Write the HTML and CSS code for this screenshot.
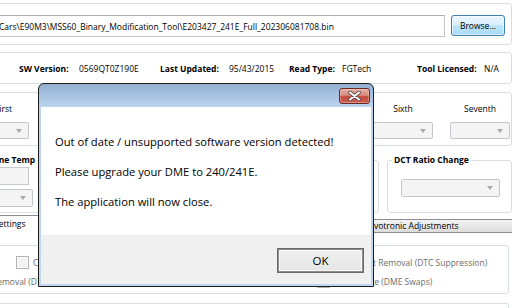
FILE: index.html
```html
<!DOCTYPE html>
<html lang="en">
<head>
    <meta charset="UTF-8">
    <title>MSS60 Binary Modification Tool</title>
    <link rel="stylesheet" href="styles.css">
</head>
<body>
    <div class="app">
        <div class="group file-group">
            <input class="path-box" type="text" value="Cars\E90M3\MSS60_Binary_Modification_Tool\E203427_241E_Full_202306081708.bin">
            <button class="browse-btn">Browse...</button>
        </div>

        <div class="group info-group">
            <span class="info-label">SW Version:</span><span>0569QT0Z190E</span>
            <span class="info-label">Last Updated:</span><span>95/43/2015</span>
            <span class="info-label">Read Type:</span><span>FGTech</span>
            <span class="info-label">Tool Licensed:</span><span>N/A</span>
        </div>

        <div class="group gear-group">
            <div class="gear-col"><span>First</span><div class="combo"></div></div>
            <div class="gear-col"><span>Second</span><div class="combo"></div></div>
            <div class="gear-col"><span>Third</span><div class="combo"></div></div>
            <div class="gear-col"><span>Fourth</span><div class="combo"></div></div>
            <div class="gear-col"><span>Fifth</span><div class="combo"></div></div>
            <div class="gear-col"><span>Sixth</span><div class="combo"></div></div>
            <div class="gear-col"><span>Seventh</span><div class="combo"></div></div>
        </div>

        <div class="option-row">
            <fieldset class="box temp-box">
                <legend>Engine Temp</legend>
                <div class="text-box"></div>
                <div class="combo temp-combo"></div>
            </fieldset>
            <fieldset class="box mid-box">
                <legend>Rev Limiter</legend>
            </fieldset>
            <fieldset class="box dct-box">
                <legend>DCT Ratio Change</legend>
                <div class="combo dct-combo"></div>
            </fieldset>
        </div>

        <div class="tabs">
            <div class="tab-strip">
                <span class="tab active">Settings</span>
                <span class="tab tab-fill">Limiters</span>
                <span class="tab tab-servo">Servotronic Adjustments</span>
            </div>
            <div class="tab-page">
                <div class="group flag-group">
                    <div class="flag-row row-a">
                        <label class="flag"><span class="check"></span>Cold Start Delete</label>
                        <label class="flag"><span class="check"></span>Cat Removal (DTC Suppression)</label>
                    </div>
                    <div class="flag-row row-b">
                        <label class="flag"><span class="check"></span>Secondary Air Removal (DTC Suppression)</label>
                        <label class="flag"><span class="check"></span>EWS Delete (DME Swaps)</label>
                    </div>
                </div>
                <div class="group next-group"></div>
            </div>
        </div>
    </div>

    <!-- message box shown on load -->
    <div class="dialog">
        <div class="title-bar">
            <button class="close-btn">
                <svg width="13" height="10" viewBox="0 0 13 10">
                    <path d="M2 1.5 L11 8.5 M11 1.5 L2 8.5" stroke="#5a4a48" stroke-width="3.6" stroke-linecap="round"/>
                    <path d="M2 1.5 L11 8.5 M11 1.5 L2 8.5" stroke="#ffffff" stroke-width="2" stroke-linecap="round"/>
                </svg>
            </button>
        </div>
        <div class="dialog-body">
            <p>Out of date / unsupported software version detected!</p>
            <p>Please upgrade your DME to 240/241E.</p>
            <p>The application will now close.</p>
        </div>
        <div class="dialog-footer">
            <button class="ok-btn">OK</button>
        </div>
    </div>
</body>
</html>
```

FILE: styles.css
```css
body {
    margin: 0;
    overflow: hidden;
    background-color: #fff;
    font-family: "Open Sans", sans-serif;
    font-size: 8.5px;
    color: #000;
}
.app {
    width: 572px;
    height: 308px;
    margin-left: -60px;
    overflow: hidden;
}
.group {
    border: 1px solid #d5dfe5;
    border-radius: 3px;
    box-sizing: border-box;
}
.file-group {
    margin-top: 3px;
    height: 42px;
    display: flex;
    align-items: flex-start;
    padding: 11px 0 0 51px;
}
.path-box {
    width: 453px;
    height: 22px;
    box-sizing: border-box;
    margin: 0;
    border: 1px solid #c2c6cc;
    border-top-color: #abadb3;
    padding: 0 0 0 6px;
    font-family: inherit;
    font-size: inherit;
    color: #000;
    background: #fff;
    outline: none;
}
.browse-btn {
    margin: 0 0 0 6px;
    width: 54px;
    height: 21px;
    padding: 0;
    border: 1px solid #3c7fb1;
    border-radius: 3px;
    background: linear-gradient(#eaf6fd 0%, #d9f0fc 49%, #bee6fd 50%, #a7d9f5 100%);
    box-shadow: inset 0 0 0 1px rgba(255, 255, 255, 0.6);
    font-family: inherit;
    font-size: inherit;
    color: #000;
}
.info-group {
    margin-top: 7px;
    height: 32px;
    display: grid;
    grid-template-columns: 60px 81px 69px 60px 53px 75px 67px auto;
    align-items: center;
    padding: 1px 0 0 78px;
}
.info-label {
    font-weight: bold;
}
.gear-group {
    margin-top: 8px;
    height: 54px;
    display: grid;
    grid-template-columns: repeat(5, 80.8px) 77px 60px;
    padding: 10px 0 0 28px;
}
.gear-col {
    width: 60px;
    display: flex;
    flex-direction: column;
    align-items: center;
    gap: 7px;
}
.gear-col span {
    line-height: 12px;
}
.gear-col:first-child span {
    margin-left: 9px;
}
.combo {
    width: 60px;
    height: 17px;
    box-sizing: border-box;
    border: 1px solid #c3c6ca;
    border-radius: 2px;
    background: #f4f4f4;
    display: flex;
    align-items: center;
    justify-content: flex-end;
    padding-right: 6px;
}
.combo::after {
    content: "";
    border-left: 3.5px solid transparent;
    border-right: 3.5px solid transparent;
    border-top: 4px solid #a9a9a9;
}
.option-row {
    margin-top: 8px;
    display: flex;
    align-items: flex-start;
}
.box {
    margin: 0;
    padding: 0;
    min-width: 0;
    height: 59px;
    box-sizing: border-box;
    border: 1px solid #d5dfe5;
    border-radius: 3px;
}
.box legend {
    font-weight: bold;
    line-height: 12px;
    padding: 0 2px;
    margin-left: 4px;
}
.temp-box {
    margin-left: 34px;
    width: 146px;
}
.text-box {
    margin: 1px 0 0 5px;
    width: 49px;
    height: 18px;
    box-sizing: border-box;
    border: 1px solid #c9cbcf;
    background: #f4f4f4;
}
.temp-combo {
    margin: 4px 0 0 5px;
    width: 53px;
    height: 18px;
}
.mid-box {
    margin-left: 8px;
    width: 251px;
}
.dct-box {
    margin-left: 8px;
    width: 125px;
}
.dct-combo {
    margin: 13px 0 0 13px;
    width: 99px;
    height: 18px;
}
.tabs {
    margin-top: 2px;
    margin-right: -10px;
}
.tab-strip {
    display: flex;
    align-items: flex-end;
    height: 17px;
    padding-left: 47px;
}
.tab {
    height: 13px;
    box-sizing: border-box;
    padding: 0 6px;
    border: 1px solid #898c95;
    border-bottom: none;
    background: linear-gradient(#f4f4f4, #e8e8e8 50%, #dcdcdc);
    line-height: 12px;
    white-space: nowrap;
}
.tab.active {
    width: 200px;
    height: 18px;
    margin-bottom: -1px;
    background: #fff;
    line-height: 16px;
    position: relative;
}
.tab-fill {
    flex: 1;
}
.tab-servo {
    width: 168px;
}
.tab-page {
    height: 80px;
    box-sizing: border-box;
    border: 1px solid #898c95;
    background: #fff;
    padding: 12px 12px 0 40px;
}
.flag-group {
    height: 49px;
    padding-top: 8px;
    display: flex;
    flex-direction: column;
    gap: 3px;
}
.flag-row {
    display: grid;
    height: 16px;
}
.row-a {
    grid-template-columns: 330px auto;
    padding-left: 34px;
}
.row-b {
    grid-template-columns: 399px auto;
    margin-left: -64px;
}
.flag {
    display: flex;
    align-items: center;
    gap: 4px;
    white-space: nowrap;
    color: #6d6d6d;
}
.check {
    width: 13px;
    height: 13px;
    box-sizing: border-box;
    border: 1px solid #b2b2b2;
    background: #f2f2f2;
    box-shadow: inset 0 0 0 1px #fbfbfb;
}
.next-group {
    margin-top: 9px;
    height: 20px;
}
.dialog {
    position: absolute;
    left: 38px;
    top: 83px;
    width: 336px;
    height: 204px;
    box-sizing: border-box;
    border: 1px solid #1d1d1d;
    border-radius: 6px 6px 0 0;
    background: linear-gradient(#93afd1, #bcd4ee 23px, #bfd6ef);
    padding: 0 2px 2px;
    display: flex;
    flex-direction: column;
}
.title-bar {
    height: 23px;
    box-sizing: border-box;
    display: flex;
    justify-content: flex-end;
    align-items: flex-start;
    padding: 4px 1px 0 0;
}
.close-btn {
    width: 31px;
    height: 16px;
    box-sizing: border-box;
    padding: 0;
    border: 1px solid #6b2a24;
    border-radius: 3px;
    background: linear-gradient(#e6aca3, #d88a80 45%, #c54a3e 55%, #cc6255);
    box-shadow: inset 0 0 0 1px rgba(255, 220, 215, 0.35);
    display: flex;
    align-items: center;
    justify-content: center;
}
.dialog-body {
    height: 128px;
    box-sizing: border-box;
    background: #fff;
    padding: 27px 14px 0;
    font-size: 11.2px;
}
.dialog-body p {
    margin: 0 0 15px;
    line-height: 15px;
}
.dialog-footer {
    height: 49px;
    box-sizing: border-box;
    background: #f0f0f0;
    padding: 13px 7px 0;
    display: flex;
    justify-content: flex-end;
    align-items: flex-start;
}
.ok-btn {
    width: 87px;
    height: 25px;
    padding: 0;
    border: 1px solid #6a6a6a;
    background: linear-gradient(#f0f0f0, #e6e6e6);
    box-shadow: inset 0 0 0 1px #8c8c8c, inset 0 0 0 2px #f7f7f7;
    font-family: "Open Sans", sans-serif;
    font-size: 11.5px;
    color: #000;
}
```
